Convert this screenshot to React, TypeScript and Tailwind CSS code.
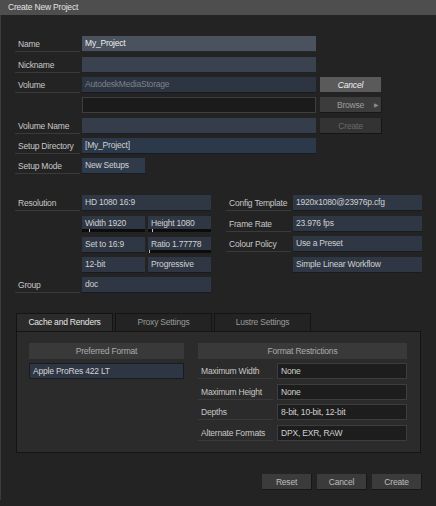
import React from 'react';

const font = "font-['Liberation_Sans',Arial,sans-serif]";

const Label: React.FC<{ text?: string; line?: boolean; w?: string }> = ({ text, line = true, w = 'w-[65px]' }) => (
    <div className={`${w} h-4 shrink-0 pl-[3px] leading-4 text-[#c8c8c8] ${line ? 'border-b border-[#3a3a3a]' : ''}`}>
        {text}
    </div>
);

const Field: React.FC<{ text?: string; className?: string; slider?: string }> = ({ text, className = '', slider }) => (
    <div className={`relative h-4 pl-[3px] leading-[15px] border-b border-black/50 ${className}`}>
        {text}
        {slider && (
            <div className="absolute left-0 right-0 bottom-[-1px] h-[3px] bg-[#0c0c0c]">
                <div className={`absolute top-0 w-px h-[3px] bg-[#bfbfbf] ${slider}`} />
            </div>
        )}
    </div>
);

const SideButton: React.FC<{ text: string; className?: string; arrow?: boolean }> = ({ text, className = '', arrow }) => (
    <div className={`relative ml-1 w-[62px] h-4 leading-4 text-center border-b border-r border-black/60 ${className}`}>
        {text}
        {arrow && <span className="absolute right-[2px] top-0 text-[6px] text-[#8a8a8a]">▶</span>}
    </div>
);

const BottomButton: React.FC<{ text: string }> = ({ text }) => (
    <div className="w-[50px] h-4 leading-4 text-center bg-[#3b3b3b] text-[#bdbdbd] border-b border-r border-black/60">{text}</div>
);

export default function App() {
    return (
        <div className={`w-[436px] h-[506px] bg-[#232323] text-[8.5px] tracking-[-0.2px] whitespace-nowrap ${font}`}>
            <div className="h-[15px] bg-[#4e4e4e] pl-2 leading-[15px] text-[#e2e2e2]">Create New Project</div>
            <div className="h-[485px] border-l border-[#3c3c3c] pl-[14px]">
                {/* project fields */}
                <div className="pt-[21px] flex flex-col gap-1">
                    <div className="flex items-start">
                        <Label text="Name" />
                        <Field text="My_Project" className="ml-[2px] w-[234px] bg-[#4a525e] text-[#ececec]" />
                    </div>
                    <div className="flex items-start mt-px">
                        <Label text="Nickname" />
                        <Field className="ml-[2px] w-[234px] bg-[#3a4250]" />
                    </div>
                    <div className="flex items-start">
                        <Label text="Volume" />
                        <Field text="AutodeskMediaStorage" className="ml-[2px] w-[234px] bg-[#2d3542] text-[#7c828b]" />
                        <SideButton text="Cancel" className="bg-[#5a5a5a] text-[#f0f0f0] italic" />
                    </div>
                    <div className="flex items-start">
                        <Label line={false} />
                        <div className="ml-[2px] w-[234px] h-4 bg-[#1b1b1b] border border-[#3e3e3e]" />
                        <SideButton text="Browse" arrow className="bg-[#3c3c3c] text-[#9c9c9c]" />
                    </div>
                    <div className="flex items-start mt-px">
                        <Label text="Volume Name" />
                        <Field className="ml-[2px] w-[234px] bg-[#353d4a]" />
                        <SideButton text="Create" className="bg-[#333333] text-[#6a6a6a]" />
                    </div>
                    <div className="flex items-start">
                        <Label text="Setup Directory" />
                        <Field text="[My_Project]" className="ml-[2px] w-[234px] bg-[#2c394a] text-[#d2d2d2]" />
                    </div>
                    <div className="flex items-start">
                        <Label text="Setup Mode" />
                        <Field text="New Setups" className="ml-[2px] w-[63px] bg-[#2f3a4a] text-[#d2d2d2]" />
                    </div>
                </div>

                {/* resolution + config */}
                <div className="mt-[21px] flex gap-[15px] text-[#d0d0d0]">
                    <div className="flex flex-col gap-1">
                        <div className="flex">
                            <Label text="Resolution" />
                            <Field text="HD 1080 16:9" className="ml-[2px] w-[129px] bg-[#2f3744]" />
                        </div>
                        <div className="flex mt-px">
                            <Label line={false} />
                            <Field text="Width 1920" slider="left-[7px]" className="ml-[2px] w-[63px] bg-[#2f3744]" />
                            <Field text="Height 1080" slider="left-[4px]" className="ml-[3px] w-[63px] bg-[#2f3744]" />
                        </div>
                        <div className="flex mt-px">
                            <Label line={false} />
                            <Field text="Set to 16:9" className="ml-[2px] w-[63px] bg-[#2f3744]" />
                            <Field text="Ratio 1.77778" slider="left-[1px]" className="ml-[3px] w-[63px] bg-[#2f3744]" />
                        </div>
                        <div className="flex">
                            <Label line={false} />
                            <Field text="12-bit" className="ml-[2px] w-[63px] bg-[#2f3744]" />
                            <Field text="Progressive" className="ml-[3px] w-[63px] bg-[#2f3744]" />
                        </div>
                        <div className="flex">
                            <Label text="Group" />
                            <Field text="doc" className="ml-[2px] w-[129px] bg-[#2f3744]" />
                        </div>
                    </div>
                    <div className="flex flex-col gap-1">
                        <div className="flex">
                            <Label text="Config Template" />
                            <Field text="1920x1080@23976p.cfg" className="ml-[2px] w-[129px] bg-[#2f3744]" />
                        </div>
                        <div className="flex mt-px">
                            <Label text="Frame Rate" />
                            <Field text="23.976 fps" className="ml-[2px] w-[129px] bg-[#2f3744]" />
                        </div>
                        <div className="flex">
                            <Label text="Colour Policy" />
                            <Field text="Use a Preset" className="ml-[2px] w-[129px] bg-[#2f3744]" />
                        </div>
                        <div className="flex mt-px">
                            <Label line={false} />
                            <Field text="Simple Linear Workflow" className="ml-[2px] w-[129px] bg-[#2f3744]" />
                        </div>
                    </div>
                </div>

                {/* tabs */}
                <div className="mt-[20px] ml-px">
                    <div className="flex gap-[2px] h-[18px]">
                        <div className="w-[97px] bg-[#2b2b2b] border border-b-0 border-[#141414] text-center leading-[17px] text-[#e6e6e6]">Cache and Renders</div>
                        <div className="w-[97px] bg-[#232323] border border-b-0 border-[#141414] text-center leading-[17px] text-[#9a9a9a]">Proxy Settings</div>
                        <div className="w-[97px] bg-[#232323] border border-b-0 border-[#141414] text-center leading-[17px] text-[#9a9a9a]">Lustre Settings</div>
                    </div>
                    <div className="w-[405px] h-[122px] bg-[#2b2b2b] border border-[#141414] pt-[11px] pl-[12px] flex gap-[14px]">
                        <div className="w-[155px] flex flex-col gap-1">
                            <div className="h-4 leading-4 bg-[#393939] text-center text-[#ababab]">Preferred Format</div>
                            <Field text="Apple ProRes 422 LT" className="bg-[#2e3644] text-[#d4d4d4] border border-[#222834]" />
                        </div>
                        <div className="w-[209px] flex flex-col gap-1">
                            <div className="h-4 leading-4 bg-[#393939] text-center text-[#ababab]">Format Restrictions</div>
                            {[
                                ['Maximum Width', 'None'],
                                ['Maximum Height', 'None'],
                                ['Depths', '8-bit, 10-bit, 12-bit'],
                                ['Alternate Formats', 'DPX, EXR, RAW'],
                            ].map(([l, v], i) => (
                                <div key={l} className={`flex ${i % 2 ? 'mt-px' : ''}`}>
                                    <Label text={l} w="w-[75px]" />
                                    <div className="ml-1 w-[130px] h-4 pl-[3px] leading-[14px] bg-[#1d1d1d] border border-[#3d3d3d] text-[#d0d0d0]">{v}</div>
                                </div>
                            ))}
                        </div>
                    </div>
                </div>

                {/* footer */}
                <div className="mt-[21px] w-[407px] flex justify-end gap-[5px]">
                    <BottomButton text="Reset" />
                    <BottomButton text="Cancel" />
                    <BottomButton text="Create" />
                </div>
            </div>
        </div>
    );
}
